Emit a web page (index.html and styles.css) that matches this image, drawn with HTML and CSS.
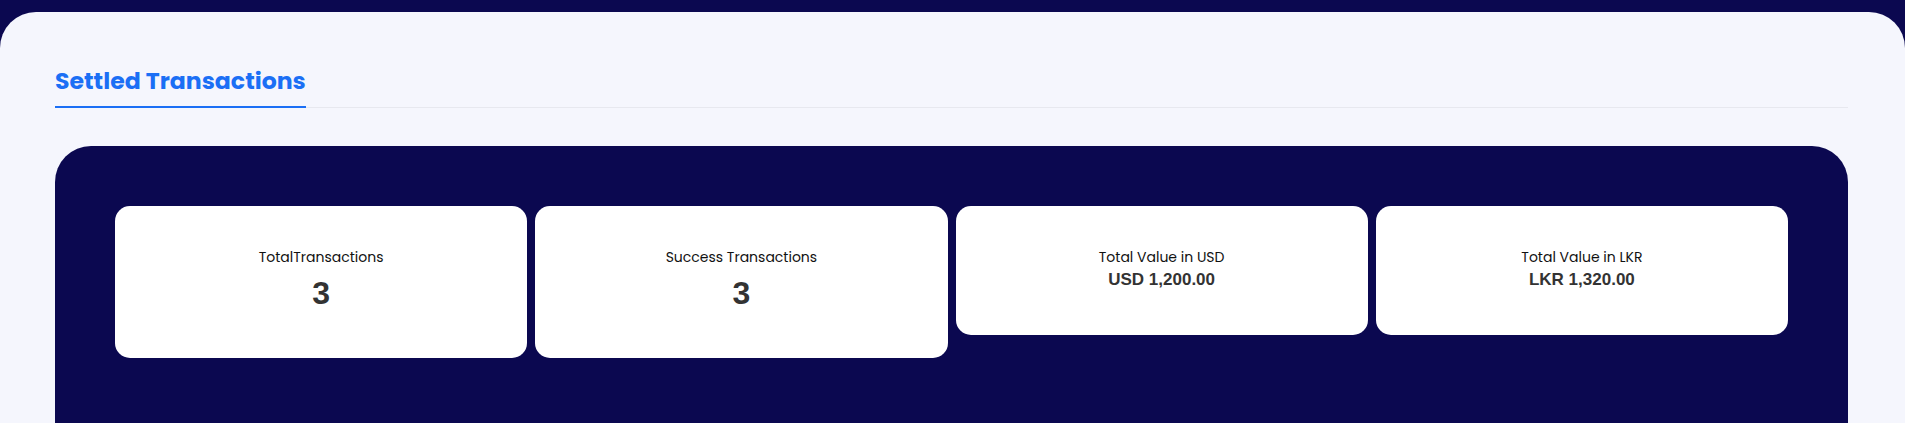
FILE: index.html
```html
<!DOCTYPE html>
<html lang="en">
<head>
<meta charset="utf-8">
<title>Settled Transactions</title>
<link rel="stylesheet" href="styles.css">
</head>
<body>
  <main class="panel">
    <nav class="tabs">
      <div class="tab tab--active">Settled Transactions</div>
    </nav>
    <section class="summary">
      <div class="stats">
        <div class="stat">
          <p class="stat-label">TotalTransactions</p>
          <h2 class="stat-value stat-value--count">3</h2>
        </div>
        <div class="stat">
          <p class="stat-label">Success Transactions</p>
          <h2 class="stat-value stat-value--count">3</h2>
        </div>
        <div class="stat">
          <p class="stat-label">Total Value in USD</p>
          <h3 class="stat-value stat-value--money">USD 1,200.00</h3>
        </div>
        <div class="stat">
          <p class="stat-label">Total Value in LKR</p>
          <h3 class="stat-value stat-value--money">LKR 1,320.00</h3>
        </div>
      </div>
    </section>
  </main>
</body>
</html>
```

FILE: styles.css
```css
html, body {
  margin: 0;
  padding: 0;
}

body {
  background: #0b0850;
  font-family: "Poppins", "Inter", "Liberation Sans", sans-serif;
  overflow: hidden;
  height: 423px;
}

.panel {
  margin-top: 12px;
  background: #f5f6fd;
  border-radius: 36px 36px 0 0;
  padding: 51px 57px 0 55px;
  min-height: 500px;
}

.tabs {
  display: flex;
  border-bottom: 1px solid #e7e8ef;
}

.tab {
  font-size: 23.6px;
  line-height: 36px;
  font-weight: 700;
  color: #1b6ff5;
  padding-bottom: 7px;
  border-bottom: 2px solid #1b6ff5;
  margin-bottom: -1px;
}

.summary {
  margin-top: 38px;
  background: #0b0850;
  border-radius: 36px;
  padding: 60px;
  min-height: 400px;
}

.stats {
  display: flex;
  align-items: flex-start;
  gap: 8px;
}

.stat {
  flex: 1 1 0;
  background: #ffffff;
  border-radius: 15px;
  padding: 40px 20px;
  text-align: center;
}

.stat-label {
  margin: 0;
  font-size: 14px;
  line-height: 22px;
  color: #111111;
}

.stat-value {
  font-family: "Liberation Sans", Arial, sans-serif;
  font-weight: 700;
  color: #333333;
}

.stat-value--count {
  font-size: 32px;
  line-height: 36px;
  margin: 7px 0 7px;
}

.stat-value--money {
  font-size: 17px;
  line-height: 22px;
  margin: 1px 0 4px;
}
```
